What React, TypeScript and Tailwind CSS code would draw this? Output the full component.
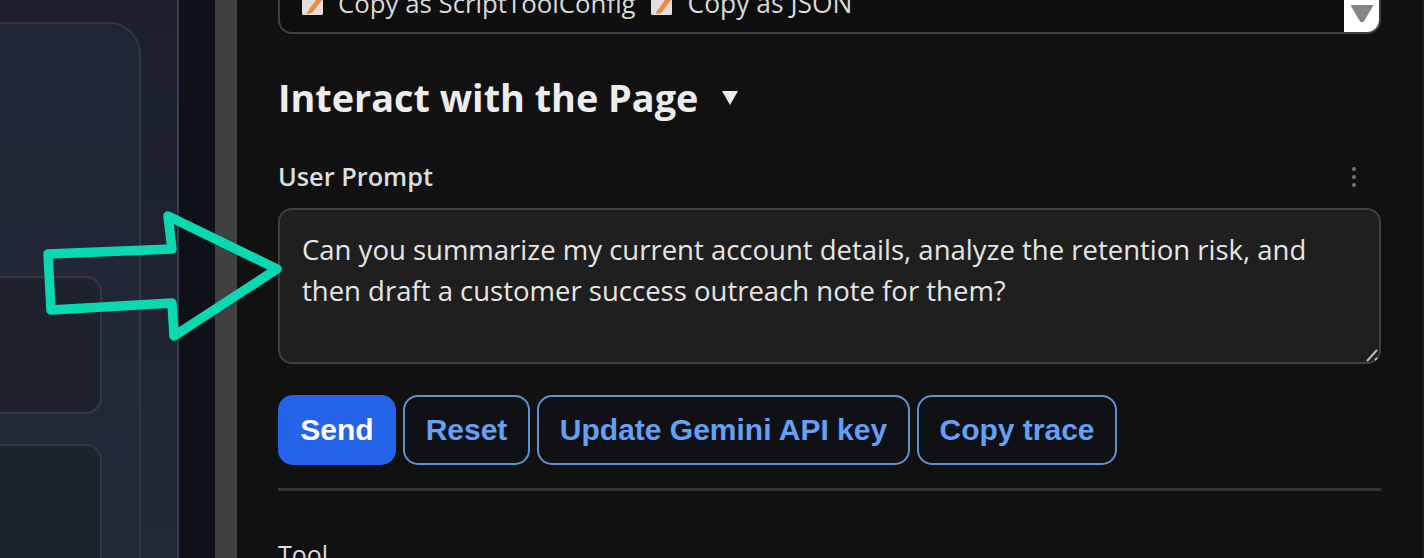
const sans = "font-['Open_Sans','Noto_Sans',sans-serif]";
const arial = "font-['Liberation_Sans',Arial,sans-serif]";

function MemoIcon() {
  return (
    <svg width="25" height="30" viewBox="0 0 25 30" className="mt-[-3px] shrink-0">
      <rect x="0" y="4" width="21" height="24" rx="1.5" fill="#e4dfdb" />
      <path d="M6 24 L16 10 L20 13 L10 26 L5 27 Z" fill="#ee8a45" />
      <path d="M16 10 L19 5 L24 8 L20 13 Z" fill="#e2504c" />
    </svg>
  );
}

function OutlineButton({ label, width }: { label: string; width: string }) {
  return (
    <button className={`${width} h-[70px] rounded-[15px] border-2 border-[#5d93d3] bg-[#0f1115] pb-[2px] ${arial} text-[30px] font-bold text-[#64a0f5]`}>
      {label}
    </button>
  );
}

export default function App() {
  return (
    <div className="relative flex h-[558px] w-[1424px] overflow-hidden bg-[#111111]">
      {/* Left preview, cut off by the window */}
      <aside className="w-[215px] shrink-0 overflow-hidden bg-[#0f1118]">
        <div className="-mt-10 -ml-10 h-[700px] w-[219px] rounded-[36px] border-2 border-[#383e4d] bg-gradient-to-b from-[#1b1f2c] to-[#232937] pt-[60px] pr-[36px]">
          <div className="h-[640px] rounded-[32px] border-2 border-[#303644] bg-gradient-to-b from-[#1f2534] to-[#232937] pt-[252px] pr-[37px]">
            <div className="flex flex-col gap-[30px]">
              <div className="h-[138px] rounded-[16px] border-2 border-[#313744] bg-[#1d222c]" />
              <div className="h-[200px] rounded-[16px] border-2 border-[#313744] bg-[#1d232d]" />
            </div>
          </div>
        </div>
      </aside>

      {/* Splitter */}
      <div className="w-[22px] shrink-0 bg-[#404040]" />

      {/* Right panel */}
      <main className={`flex-1 border-r-2 border-[#1d1d1d] pr-[41px] pl-[41px] ${sans}`}>
        <div className="-mt-[27px] flex h-[61px] items-start overflow-hidden rounded-b-[14px] border-2 border-t-0 border-[#404040] bg-[#0e0e0e] pl-[22px]">
          <div className="flex h-[61px] flex-1 items-center text-[25.8px] text-[#d9d9d9]">
            <MemoIcon />
            <span className="ml-[11px]">Copy as ScriptToolConfig</span>
            <span className="ml-[15px]"><MemoIcon /></span>
            <span className="ml-[12px] text-[26.4px]">Copy as JSON</span>
          </div>
          <div className="mt-[27px] flex h-[32px] w-[35px] items-start justify-center bg-white pt-[3px]">
            <svg width="24" height="20" viewBox="0 0 24 20">
              <path d="M2 3 H22 L13 18 H11 Z" fill="#858585" stroke="#858585" strokeWidth="2" strokeLinejoin="round" />
            </svg>
          </div>
        </div>

        <div className="mt-[35px] flex h-[58px] items-center gap-[24px]">
          <h2 className="text-[37.8px] leading-none font-bold text-[#ececec]">Interact with the Page</h2>
          <svg width="16" height="14" viewBox="0 0 16 14">
            <path d="M0 0 H16 L8 14 Z" fill="#ececec" />
          </svg>
        </div>

        <div className="mt-[32px] flex h-[36px] items-center justify-between pr-[24px]">
          <label className="text-[25.3px] font-semibold text-[#dedede]">User Prompt</label>
          <svg width="6" height="22" viewBox="0 0 6 22">
            <circle cx="3" cy="3" r="2" fill="#777777" />
            <circle cx="3" cy="11" r="2" fill="#777777" />
            <circle cx="3" cy="19" r="2" fill="#777777" />
          </svg>
        </div>

        <div className="relative mt-[13px]">
          <textarea
            defaultValue="Can you summarize my current account details, analyze the retention risk, and then draft a customer success outreach note for them?"
            className="block h-[156px] w-full resize-none rounded-[14px] border-2 border-[#404040] bg-[#1f1f1f] px-[22px] py-[19px] text-[27.5px] leading-[41px] text-[#e6e6e6] outline-none"
          />
          <svg className="absolute right-[2px] bottom-[2px]" width="14" height="14" viewBox="0 0 14 14">
            <path d="M2 13 L12 2" stroke="#bdbdbd" strokeWidth="2" />
            <path d="M10 12 L12 10" stroke="#bdbdbd" strokeWidth="2" />
          </svg>
        </div>

        <div className="mt-[31px] flex gap-[7px]">
          <button className={`h-[70px] w-[118px] rounded-[15px] bg-[#2563eb] pb-[2px] ${arial} text-[30px] font-bold text-white`}>
            Send
          </button>
          <OutlineButton label="Reset" width="w-[127px]" />
          <OutlineButton label="Update Gemini API key" width="w-[373px]" />
          <OutlineButton label="Copy trace" width="w-[200px]" />
        </div>

        <div className="mt-[23px] h-[3px] bg-[#333333]" />

        <div className="mt-[45px] text-[25px] text-[#dedede]">Tool</div>
      </main>

      {/* Annotation arrow laid over the page */}
      <svg className="absolute top-0 left-0" width="300" height="558" viewBox="0 0 300 558">
        <path
          d="M48 254 L172 249 L168 216 L277 269 L174 336 L172 303 L51 310 Z"
          fill="none"
          stroke="#08d9b0"
          strokeWidth="9.5"
          strokeLinejoin="round"
        />
      </svg>
    </div>
  );
}
